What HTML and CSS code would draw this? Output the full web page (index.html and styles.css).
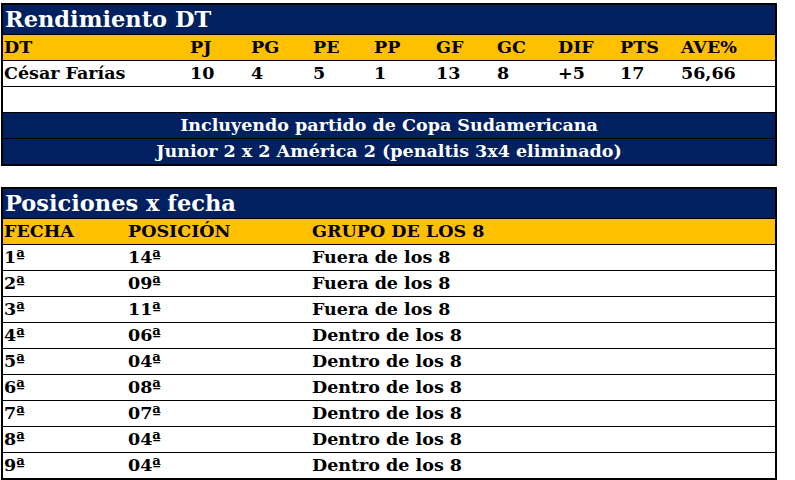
FILE: index.html
```html
<!DOCTYPE html>
<html lang="es">
<head>
<meta charset="utf-8">
<title>Rendimiento DT</title>
<link rel="stylesheet" href="styles.css">
</head>
<body>
<section class="sheet sheet-dt">
  <div class="row title">Rendimiento DT</div>
  <div class="row head cols-dt">
    <span>DT</span><span>PJ</span><span>PG</span><span>PE</span><span>PP</span><span>GF</span><span>GC</span><span>DIF</span><span>PTS</span><span>AVE%</span>
  </div>
  <div class="row cols-dt">
    <span>César Farías</span><span>10</span><span>4</span><span>5</span><span>1</span><span>13</span><span>8</span><span>+5</span><span>17</span><span>56,66</span>
  </div>
  <div class="row"></div>
  <div class="row note">Incluyendo partido de Copa Sudamericana</div>
  <div class="row note last">Junior 2 x 2 América 2 (penaltis 3x4 eliminado)</div>
</section>

<section class="sheet sheet-pos">
  <div class="row title">Posiciones x fecha</div>
  <div class="row head cols-pos"><span>FECHA</span><span>POSICIÓN</span><span>GRUPO DE LOS 8</span></div>
  <div class="row cols-pos"><span>1ª</span><span>14ª</span><span>Fuera de los 8</span></div>
  <div class="row cols-pos"><span>2ª</span><span>09ª</span><span>Fuera de los 8</span></div>
  <div class="row cols-pos"><span>3ª</span><span>11ª</span><span>Fuera de los 8</span></div>
  <div class="row cols-pos"><span>4ª</span><span>06ª</span><span>Dentro de los 8</span></div>
  <div class="row cols-pos"><span>5ª</span><span>04ª</span><span>Dentro de los 8</span></div>
  <div class="row cols-pos"><span>6ª</span><span>08ª</span><span>Dentro de los 8</span></div>
  <div class="row cols-pos"><span>7ª</span><span>07ª</span><span>Dentro de los 8</span></div>
  <div class="row cols-pos"><span>8ª</span><span>04ª</span><span>Dentro de los 8</span></div>
  <div class="row cols-pos last"><span>9ª</span><span>04ª</span><span>Dentro de los 8</span></div>
</section>
</body>
</html>
```

FILE: styles.css
```css
html, body {
  margin: 0;
  background: #ffffff;
}
body {
  padding: 3px 0 0 1px;
  font-family: "DejaVu Serif", "Liberation Serif", serif;
  font-weight: bold;
  font-size: 17.5px;
  color: #000;
}
.sheet {
  width: 772px;
  border: 2px solid #000;
  background: #fff;
}
.sheet-pos {
  margin-top: 21px;
}
.row {
  box-sizing: border-box;
  height: 26px;
  border-bottom: 1px solid #000;
  display: flex;
  align-items: flex-end;
  padding-bottom: 3px;
  line-height: 20px;
  white-space: nowrap;
}
.row.last {
  border-bottom: 0;
  height: 25px;
}
.row.title {
  height: 30px;
  background: #002060;
  color: #fff;
  font-size: 22.5px;
  line-height: 27px;
  padding-left: 2px;
  padding-bottom: 1px;
}
.row.head {
  background: #ffc000;
}
.row.note {
  background: #002060;
  color: #fff;
  justify-content: center;
}
.cols-dt {
  display: grid;
  grid-template-columns: 186px 61px 62px 61px 62px 61px 61px 62px 61px 1fr;
  align-items: end;
}
.cols-pos {
  display: grid;
  grid-template-columns: 124px 184px 1fr;
  align-items: end;
}
.cols-dt span, .cols-pos span {
  padding-left: 1px;
}
```
